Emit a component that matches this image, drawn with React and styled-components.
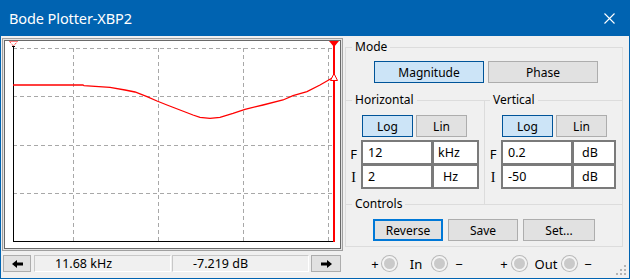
import styled, { createGlobalStyle } from "styled-components";

const GlobalStyle = createGlobalStyle`
  html, body { margin: 0; padding: 0; }
  body {
    font-family: "Noto Sans", "Segoe UI", sans-serif;
    font-size: 12px;
    color: #000;
    background: #fff;
  }
`;

// grid positions, page coordinates (svg viewBox is offset to match)
const gridX = [73, 158, 243, 328];
const gridY = [48, 96, 145, 193];
const curve = [
  [13, 85], [83, 85], [84, 85.7], [110, 87.3], [125, 90], [135, 92], [147, 96.7],
  [157, 101], [167, 105], [180, 110], [193, 115], [200, 117.3], [210, 118.3],
  [220, 117.3], [233, 113.3], [245, 109.3], [263, 105], [283, 100], [293, 95.7],
  [307, 91.7], [320, 85], [330, 79.3], [334, 77],
];

function Plot() {
  return (
    <svg width="335" height="207" viewBox="5 41 335 207" style={{ display: "block", background: "#fff" }}>
      <g stroke="#a8a8a8" strokeWidth="1" strokeDasharray="4 3" fill="none">
        {gridY.map((y) => <line key={y} x1="13" y1={y + 0.5} x2="334" y2={y + 0.5} />)}
        {gridX.map((x) => <line key={x} x1={x + 0.5} y1="48" x2={x + 0.5} y2="241" />)}
      </g>
      <line x1="13.5" y1="46" x2="13.5" y2="242" stroke="#000" />
      <line x1="12" y1="46.5" x2="15" y2="46.5" stroke="#000" />
      <line x1="13" y1="241.5" x2="334" y2="241.5" stroke="#000" />
      <polyline points={curve.map((p) => p.join(",")).join(" ")} fill="none" stroke="#f00" strokeWidth="1.3" />
      <line x1="334" y1="41" x2="334" y2="242" stroke="#f00" strokeWidth="2" />
      <polygon points="329,41 339,41 334,47" fill="#f00" />
      <polygon points="9.5,41.5 17.5,41.5 13.5,46" fill="none" stroke="#f00" strokeDasharray="1 1" />
      <polygon points="330.5,80.5 334,73.5 337.5,80.5" fill="#fff" stroke="#f00" />
    </svg>
  );
}

function Arrow({ dir }) {
  return (
    <svg width="11" height="8" viewBox="0 0 11 8" style={{ transform: dir === "right" ? "scaleX(-1)" : "none" }}>
      <path d="M0 4 L5 0 L5 2.5 L11 2.5 L11 5.5 L5 5.5 L5 8 Z" fill="#000" />
    </svg>
  );
}

export default function App() {
  return (
    <>
      <GlobalStyle />
      <Window>
        <TitleBar>
          <Title>Bode Plotter-XBP2</Title>
          <svg width="11" height="11" viewBox="0 0 11 11">
            <path d="M0.5 0.5 L10.5 10.5 M10.5 0.5 L0.5 10.5" stroke="#fff" strokeWidth="1.1" />
          </svg>
        </TitleBar>
        <Body>
          <PlotColumn>
            <PlotFrame>
              <Plot />
            </PlotFrame>
            <ReadoutRow>
              <ArrowButton $w={28}><Arrow dir="left" /></ArrowButton>
              <Readout>11.68 kHz</Readout>
              <Readout>-7.219 dB</Readout>
              <ArrowButton $w={30} $gap={2}><Arrow dir="right" /></ArrowButton>
            </ReadoutRow>
          </PlotColumn>

          <SettingsColumn>
            <Panel>
              <ModeSet>
                <Legend>Mode</Legend>
                <ButtonRow $indent={28} $gap={4}>
                  <Button $active $w={110}>Magnitude</Button>
                  <Button $w={110}>Phase</Button>
                </ButtonRow>
              </ModeSet>

              <AxisRow>
                <AxisSet $divider>
                  <Legend>Horizontal</Legend>
                  <ButtonRow $indent={16} $gap={3}>
                    <Button $active $w={51}>Log</Button>
                    <Button $w={51}>Lin</Button>
                  </ButtonRow>
                  <FieldRow>
                    <RowLabel $w={15}>F</RowLabel>
                    <Value>12</Value>
                    <Unit $w={47} $pad={4}>kHz</Unit>
                  </FieldRow>
                  <FieldRow $stack>
                    <RowLabel $w={15} $serif>I</RowLabel>
                    <Value>2</Value>
                    <Unit $w={47} $pad={9}>Hz</Unit>
                  </FieldRow>
                </AxisSet>
                <AxisSet>
                  <Legend $offset={5}>Vertical</Legend>
                  <ButtonRow $indent={17} $gap={3}>
                    <Button $active $w={51}>Log</Button>
                    <Button $w={51}>Lin</Button>
                  </ButtonRow>
                  <FieldRow>
                    <RowLabel $w={16}>F</RowLabel>
                    <Value>0.2</Value>
                    <Unit $w={44} $pad={8}>dB</Unit>
                  </FieldRow>
                  <FieldRow $stack>
                    <RowLabel $w={16} $serif>I</RowLabel>
                    <Value>-50</Value>
                    <Unit $w={44} $pad={8}>dB</Unit>
                  </FieldRow>
                </AxisSet>
              </AxisRow>

              <ControlsSet>
                <Legend>Controls</Legend>
                <ButtonRow $indent={27} $gap={5}>
                  <Button $focus $w={70}>Reverse</Button>
                  <Button $w={70}>Save</Button>
                  <Button $w={72}>Set...</Button>
                </ButtonRow>
              </ControlsSet>
            </Panel>

            <Terminals>
              <Sign>+</Sign>
              <Jack $ml={3} />
              <JackLabel $ml={7}>In</JackLabel>
              <Jack $ml={4} />
              <Sign $ml={8}>−</Sign>
              <Sign $ml={37}>+</Sign>
              <Jack $ml={4} />
              <JackLabel $ml={7}>Out</JackLabel>
              <Jack $ml={4} />
              <Sign $ml={7}>−</Sign>
            </Terminals>
          </SettingsColumn>
        </Body>
        <Grip width="11" height="11" viewBox="0 0 11 11">
          <g fill="#b4b4b4">
            <rect x="8" y="0" width="2" height="2" />
            <rect x="4" y="4" width="2" height="2" />
            <rect x="8" y="4" width="2" height="2" />
            <rect x="0" y="8" width="2" height="2" />
            <rect x="4" y="8" width="2" height="2" />
            <rect x="8" y="8" width="2" height="2" />
          </g>
        </Grip>
      </Window>
    </>
  );
}

const Window = styled.div`
  position: relative;
  width: 630px;
  height: 279px;
  box-sizing: border-box;
  display: flex;
  flex-direction: column;
  background: #f0f0f0;
  border: 1px solid #0063b1;
  border-top: none;
`;

const TitleBar = styled.div`
  height: 36px;
  flex: none;
  display: flex;
  align-items: center;
  justify-content: space-between;
  padding: 0 15px 0 9px;
  margin: 0 -1px;
  background: #0063b1;
  color: #fff;
`;

const Title = styled.span`
  font-size: 14.5px;
  letter-spacing: -0.1px;
`;

const Body = styled.div`
  flex: 1;
  display: flex;
`;

const PlotColumn = styled.div`
  width: 343px;
  padding-left: 1px;
  box-sizing: border-box;
  display: flex;
  flex-direction: column;
`;

const PlotFrame = styled.div`
  margin-top: 2px;
  width: 341px;
  height: 213px;
  box-sizing: border-box;
  padding: 2px;
  border: 1px solid #a0a0a0;
  box-shadow: inset 0 0 0 1px #e3e3e3, inset 0 0 0 2px #696969;
`;

const ReadoutRow = styled.div`
  margin-top: 4px;
  height: 17px;
  display: flex;
  padding-left: 1px;
`;

const ArrowButton = styled.div`
  width: ${(p) => p.$w}px;
  margin-left: ${(p) => p.$gap || 0}px;
  box-sizing: border-box;
  display: flex;
  align-items: center;
  justify-content: center;
  background: #e1e1e1;
  border: 1px solid #adadad;
`;

const Readout = styled.div`
  width: 137px;
  margin-left: 3px;
  & + & { margin-left: 1px; }
  box-sizing: border-box;
  padding-left: 20px;
  display: flex;
  align-items: center;
  border: 1px solid #fff;
  border-top-color: #c8c8c8;
  border-left-color: #c8c8c8;
  font-size: 12.5px;
`;

const SettingsColumn = styled.div`
  flex: 1;
  display: flex;
  flex-direction: column;
`;

const Panel = styled.div`
  margin: 11px 0 0 1px;
  width: 278px;
  box-sizing: border-box;
  border: 1px solid #dcdcdc;
`;

const Legend = styled.legend`
  margin-left: ${(p) => p.$offset ?? 6}px;
  padding: 0 3px;
  line-height: 16px;
  background: #f0f0f0;
`;

const ModeSet = styled.fieldset`
  margin: -9px 0 0;
  border: 0;
  padding: 6px 0 9px;
`;

const ButtonRow = styled.div`
  display: flex;
  gap: ${(p) => p.$gap}px;
  margin-left: ${(p) => p.$indent}px;
`;

const AxisRow = styled.div`
  display: flex;
`;

const AxisSet = styled.fieldset`
  margin: 0;
  padding: 7px 0 15px;
  box-sizing: border-box;
  ${(p) => (p.$divider ? "width: 139px;" : "flex: 1;")}
  border: 0;
  border-top: 1px solid #dcdcdc;
  border-right: ${(p) => (p.$divider ? "1px solid #dcdcdc" : "0")};
  min-width: 0;

  ${ButtonRow} { margin-bottom: 3px; }
`;

const Button = styled.div`
  width: ${(p) => p.$w}px;
  height: 22px;
  box-sizing: border-box;
  display: flex;
  align-items: center;
  justify-content: center;
  background: ${(p) => (p.$active ? "#cce4f7" : "#e1e1e1")};
  border: ${(p) =>
    p.$focus ? "2px solid #0078d7" : p.$active ? "1px solid #005499" : "1px solid #adadad"};
  font-size: 12px;
`;

const FieldRow = styled.div`
  display: flex;
  height: 25px;
  margin-top: ${(p) => (p.$stack ? "-1px" : "0")};
`;

const RowLabel = styled.div`
  width: ${(p) => p.$w}px;
  display: flex;
  align-items: center;
  justify-content: center;
  padding-top: 3px;
  font-size: ${(p) => (p.$serif ? "14px" : "13px")};
  font-family: ${(p) => (p.$serif ? '"Liberation Serif", serif' : "inherit")};
`;

const Box = styled.div`
  box-sizing: border-box;
  display: flex;
  align-items: center;
  background: #fff;
  border: 2px solid #7a7a7a;
  font-size: 12.5px;
`;

const Value = styled(Box)`
  width: 72px;
  padding-left: 5px;
`;

const Unit = styled(Box)`
  width: ${(p) => p.$w}px;
  margin-left: -1px;
  padding-left: ${(p) => p.$pad}px;
`;

const ControlsSet = styled.fieldset`
  margin: -8px 0 0;
  padding: 7px 0 5px;
  border: 0;
  border-top: 1px solid #dcdcdc;
`;

const Terminals = styled.div`
  margin-top: 8px;
  height: 17px;
  display: flex;
  align-items: center;
  padding-left: 27px;
`;

const Sign = styled.span`
  width: 8px;
  margin-left: ${(p) => p.$ml || 0}px;
  text-align: center;
  font-size: 13px;
`;

const JackLabel = styled.span`
  width: 24px;
  margin-left: ${(p) => p.$ml}px;
  text-align: center;
  font-size: 13px;
`;

const Jack = styled.span`
  width: 15px;
  height: 15px;
  margin-left: ${(p) => p.$ml}px;
  box-sizing: border-box;
  border-radius: 50%;
  background: #cacaca;
  border: 2px solid #f4f4f4;
  box-shadow: 0 0 0 1px #b9b9b9;
`;

const Grip = styled.svg`
  position: absolute;
  right: 2px;
  bottom: 2px;
`;
